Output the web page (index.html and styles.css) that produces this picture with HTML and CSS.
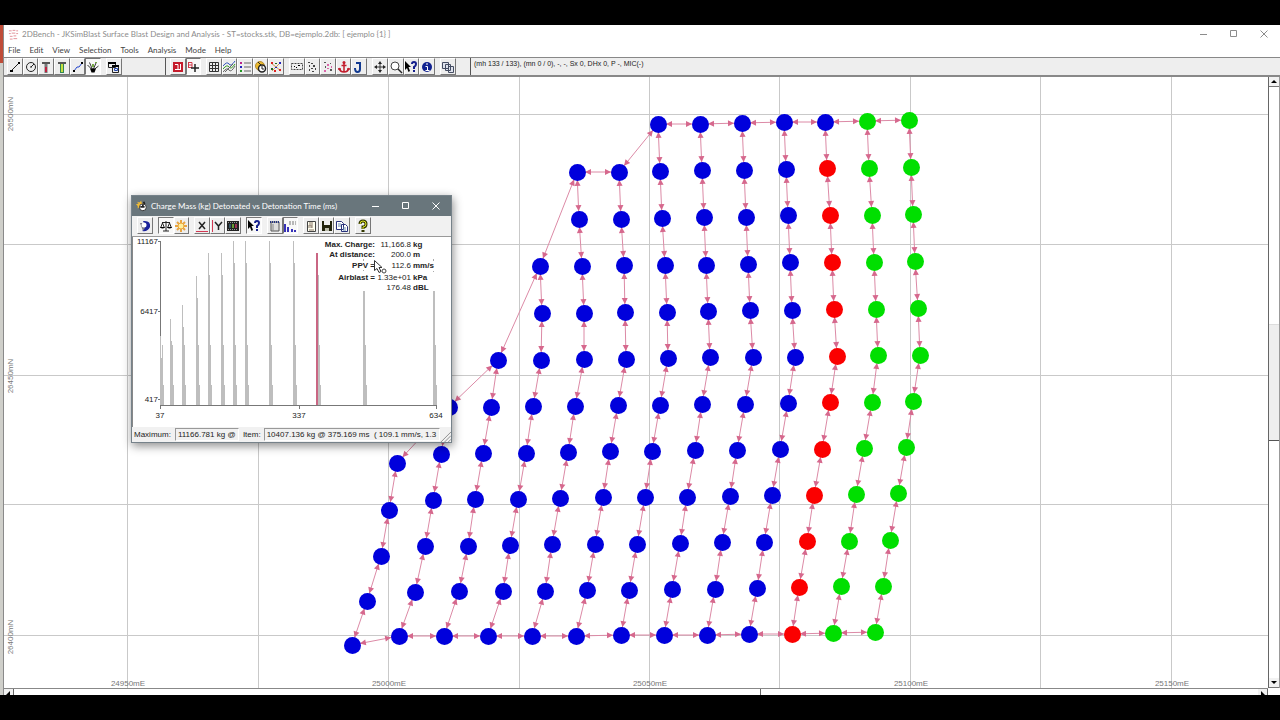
FILE: index.html
```html
<!DOCTYPE html>
<html lang="en">
<head>
<meta charset="utf-8">
<title>2DBench</title>
<link rel="stylesheet" href="styles.css">
</head>
<body>
<div class="desktop">
<div class="strip"></div>
<main class="window">
<header class="titlebar">
  <svg class="app-icon" viewBox="0 0 12 12"><path d="M1 2h3M5 1.500h3M9 2h2M1 5h2M4 4.500h4M9 5h2M2 8h3M6 7.500h3M2 11h3M6 10.500h4" stroke="#e08a93" fill="none"/></svg>
  <h1 class="app-title">2DBench - JKSimBlast Surface Blast Design and Analysis - ST=stocks.stk, DB=ejemplo.2db: [ ejemplo {1} ]</h1>
  <div class="win-controls">
    <button aria-label="Minimize"><svg viewBox="0 0 8 8"><path d="M0 4.500h7"/></svg></button>
    <button aria-label="Maximize"><svg viewBox="0 0 8 8"><path d="M.5.500h6v6h-6z"/></svg></button>
    <button aria-label="Close"><svg viewBox="0 0 8 8"><path d="M.5.500l7 7M7.500.500l-7 7"/></svg></button>
  </div>
</header>
<nav class="menu"><button>File</button><button>Edit</button><button>View</button><button>Selection</button><button>Tools</button><button>Analysis</button><button>Mode</button><button>Help</button></nav>
<div class="toolbar">
  <div class="tools-left">
    <div class="group g6">
      <button aria-label="Line"><svg viewBox="0 0 14 14"><path d="M3 11l8-8" stroke="#222"/><path d="M2 10h3v2H2zM10 2h2v2h-2z"/></svg></button>
      <button aria-label="Circle"><svg viewBox="0 0 14 14"><circle cx="7" cy="7" r="4.500" fill="none" stroke="#222"/><path d="M7 7l3-3M6 7h2" stroke="#222"/></svg></button>
      <button aria-label="Hole charge"><svg viewBox="0 0 14 14"><path d="M3 2h8v2H3z" fill="#555"/><path d="M5.500 4h3v9h-3z" fill="#777"/><path d="M6 7h2v5H6z" fill="#c02040"/></svg></button>
      <button aria-label="Hole deck"><svg viewBox="0 0 14 14"><path d="M3 2h8v2H3z" fill="#555"/><path d="M5 4h4v9H5z" fill="#385"/><path d="M6 4h2v8H6z" fill="#c8e040"/></svg></button>
      <button aria-label="Surface link"><svg viewBox="0 0 14 14"><path d="M3 11l3-4 2 0 3-4" stroke="#24c" fill="none"/><path d="M2 10h2v2H2zM10 2h2v2h-2z"/></svg></button>
      <button class="pressed" aria-label="Initiation"><svg viewBox="0 0 14 14"><path d="M1.500 5l5 5M3.500 2.500l3 7M7 10l3-7M7.500 10l5-4" fill="none" stroke="#333"/><path d="M4 8.500h6l-1.500 4h-3z"/><path d="M6 4h2v3H6zM9 2h2v1H9z" fill="#7a4"/></svg></button>
    </div>
    <div class="group g1"><button aria-label="Cascade"><svg viewBox="0 0 14 14"><path d="M1.500 2.500h7v5h-7zM5.500 5.500h6v7h-6z" fill="#eee" stroke="#222"/><path d="M1 2h8v2H1zM5 5h7v2H5z"/><path d="M7.500 8.500h3v2h-3z" fill="none" stroke="#24a"/></svg></button></div>
  </div>
  <div class="tools-main">
    <div class="group g2">
      <button aria-label="Single hole"><svg viewBox="0 0 14 14"><path d="M2 2h10v10H2z" fill="#c51c2c"/><path d="M4 4.500h3v5M4 9.500h6M9.500 4v5" stroke="#fff" fill="none"/></svg></button>
      <button class="pressed" aria-label="Add hole"><svg viewBox="0 0 14 14"><path d="M2.500 2v6M2 2.500h4v5H2M2 5h4" stroke="#d23648" fill="none"/><path d="M9 4v8M5 8h8" stroke="#222" stroke-width="1.500"/></svg></button>
    </div>
    <div class="group g5">
      <button aria-label="Grid"><svg viewBox="0 0 14 14"><path d="M2.500 2.500h9v9h-9zM5.500 2v10M8.500 2v10M2 5.500h10M2 8.500h10" stroke="#333" fill="none"/></svg></button>
      <button aria-label="Contours"><svg viewBox="0 0 14 14"><path d="M1 6q4-5 6-2t6-3" stroke="#35b" fill="none"/><path d="M1 9q4-5 6-2t6-3" stroke="#392" fill="none"/><path d="M1 12q4-5 6-2t6-4M3 12l8-8" stroke="#666" fill="none"/></svg></button>
      <button aria-label="Legend"><svg viewBox="0 0 14 14"><path d="M6 3h7M6 7h7M6 11h7" stroke="#666"/><path d="M2 2h2v2H2z" fill="#b28"/><path d="M2 6h2v2H2z" fill="#22b"/><path d="M2 10h2v2H2z" fill="#292"/></svg></button>
      <button aria-label="Detonate"><svg viewBox="0 0 14 14"><circle cx="6" cy="6" r="4.500" fill="#eab92d" stroke="#b78e32"/><circle cx="8" cy="8.500" r="3.500" fill="#fff" stroke="#222" stroke-width="1.500"/><path d="M8 6v3h2M4 2l3 3" stroke="#222" fill="none"/></svg></button>
      <button aria-label="Scatter"><svg viewBox="0 0 14 14"><path d="M2 3l10 8M3 11l8-8" stroke="#c89858"/><path d="M2 2h2v2H2zM10 9h2v2h-2zM5 10h2v2H5z" fill="#d22"/><path d="M6 3h2v1H6zM2 8h2v2H2z" fill="#262"/><path d="M10 2h2v2h-2zM6 7h2v1H6z" fill="#22b"/></svg></button>
    </div>
    <div class="group g5">
      <button aria-label="Select area"><svg viewBox="0 0 14 14"><path d="M1.500 3.500h11v6h-11z" fill="none" stroke="#444" stroke-dasharray="2 1"/><path d="M4 6h1v1H4zM8 5h2v1H8zM6 7h1v1H6z"/></svg></button>
      <button aria-label="Select points"><svg viewBox="0 0 14 14"><path d="M3 2h2v1H3zM6 3h2v1H6zM4 5h1v2H4zM8 5h2v2H8zM6 8h2v1H6zM10 8h1v2h-1zM4 9h1v2H4zM7 11h2v1H7z" fill="#444"/></svg></button>
      <button aria-label="Select links"><svg viewBox="0 0 14 14"><path d="M3 2h2v1H3zM9 3h1v1H9zM4 6h1v2H4zM9 9h2v2H9z" fill="#555"/><path d="M6 4h2v2H6zM6 8h2v1H6zM10 6h1v2h-1zM3 10h2v2H3z" fill="#db65aa"/></svg></button>
      <button aria-label="Anchor"><svg viewBox="0 0 14 14"><path d="M7 3v9M4.500 5.500h5M2 8q1 4 5 4t5-4M1 9h3M10 9h3" stroke="#c21c2c" stroke-width="1.500" fill="none"/><circle cx="7" cy="2.500" r="1.500" fill="#c21c2c"/></svg></button>
      <button aria-label="Hook"><svg viewBox="0 0 14 14"><path d="M4 3h4v6q0 3-2.500 3T3 8" stroke="#123a91" stroke-width="2" fill="none"/></svg></button>
    </div>
    <div class="group g4">
      <button aria-label="Pan"><svg viewBox="0 0 14 14"><path d="M7 3v8M3 7h8" stroke="#333"/><path d="M7 1l2 3H5zM7 13l2-3H5zM1 7l3-2v4zM13 7l-3-2v4z" fill="#222"/></svg></button>
      <button aria-label="Zoom"><svg viewBox="0 0 14 14"><circle cx="6" cy="6" r="4" fill="#fff" stroke="#444"/><path d="M9 9l4 4" stroke="#222" stroke-width="1.500"/></svg></button>
      <button aria-label="Context help"><svg viewBox="0 0 14 14"><path d="M1 1l6 6H4.500L6 11 4.500 12 3 8 1 10z"/><path d="M8 4q0-2 2-2t2 2-2 3v2M10 10v2" stroke="#141f8c" stroke-width="2" fill="none"/></svg></button>
      <button aria-label="Information"><svg viewBox="0 0 14 14"><circle cx="7" cy="7" r="5" fill="#10218f"/><path d="M7 3v2M5.500 6.500H7.500V11M5.500 10.500h4" stroke="#fff" fill="none"/></svg></button>
    </div>
    <div class="group g1"><button aria-label="Copy view"><svg viewBox="0 0 14 14"><path d="M1.500 2.500h6v6h-6zM4.500 4.500h5v6h-5zM7.500 6.500h5v6h-5z" fill="#dfe3ed" stroke="#444c62"/></svg></button></div>
  </div>
  <p class="readout">(mh 133 / 133), (mn 0 / 0), -, -, Sx 0, DHx 0, P -, MIC(-)</p>
</div>
<section class="workspace">
  <svg id="plan" class="plan" viewBox="4 77 1264 611" preserveAspectRatio="xMinYMin slice" role="img" aria-label="Blast pattern"></svg>
  <div class="vscroll"><button aria-label="Scroll up"><svg viewBox="0 0 10 9"><path d="M5 3L2 6h6z"/></svg></button><div class="vthumb"></div><button aria-label="Scroll down"><svg viewBox="0 0 10 9"><path d="M5 6L2 3h6z"/></svg></button></div>
</section>
<div class="hscroll"><button aria-label="Scroll left"><svg viewBox="0 0 9 6"><path d="M6 2v4H2z"/></svg></button><div class="hthumb"></div><button aria-label="Scroll right"><svg viewBox="0 0 9 6"><path d="M3 2v4h4z"/></svg></button></div>
</main>
</div>

<section class="dialog" role="dialog" aria-label="Charge mass chart">
  <header class="dialog-title">
    <svg class="bomb" viewBox="0 0 14 14"><path d="M1 2l3 1 2-2 1 3 3 0-2 2 1 3-4-1-3 2 0-3-2-2 3-1z" fill="#f0bb36"/><circle cx="8" cy="8.500" r="4" fill="#fff" stroke="#222"/><path d="M5 8h5M8 5v4M9 2l1 3" stroke="#222" stroke-width="2"/></svg>
    <h2>Charge Mass (kg) Detonated vs Detonation Time (ms)</h2>
    <div class="dialog-controls">
      <button aria-label="Minimize"><svg viewBox="0 0 8 8"><path d="M0 4.500h7"/></svg></button>
      <button aria-label="Maximize"><svg viewBox="0 0 8 8"><path d="M.5.500h6v6h-6z"/></svg></button>
      <button aria-label="Close"><svg viewBox="0 0 8 8"><path d="M.5.500l7 7M7.500.500l-7 7"/></svg></button>
    </div>
  </header>
  <div class="dialog-tools">
    <div class="group g1"><button aria-label="Exit"><svg viewBox="0 0 14 14"><path d="M2 4h3l3 4-3 4z" fill="#778"/><path d="M5 2q8-1 7 6-2 5-8 4 5-2 1-10z" fill="#1a229b"/><circle cx="6" cy="6" r="2.500" fill="#fff"/></svg></button></div>
    <div class="group g2">
      <button class="pressed" aria-label="Mass"><svg viewBox="0 0 14 14"><path d="M7 2v10M3 3.500h8M4 12h6M3.500 4L1.500 9M3.500 4l2 5M10.500 4l-2 5M10.500 4l2 5" stroke="#222" fill="none"/><path d="M1 8h5q-2.500 3-5 0M8 8h5q-2.500 3-5 0"/></svg></button>
      <button aria-label="Energy"><svg viewBox="0 0 14 14"><path d="M7 1v12M1 7h12M3 3l8 8M11 3l-8 8" stroke="#e9a440" stroke-width="2"/><circle cx="7" cy="7" r="3" fill="#ffee9a" stroke="#e9a53c"/></svg></button>
    </div>
    <div class="group g3">
      <button aria-label="X axis"><svg viewBox="0 0 14 14"><path d="M4 3l6 7M10 3l-6 7" stroke="#222" stroke-width="1.500"/><path d="M1 12.500h12" stroke="#d33853"/></svg></button>
      <button aria-label="Y axis"><svg viewBox="0 0 14 14"><path d="M4 3l3.500 4L11 3M7.500 7v4" stroke="#222" stroke-width="1.500" fill="none"/><path d="M1.500 1v12" stroke="#d33853"/></svg></button>
      <button aria-label="Colours"><svg viewBox="0 0 14 14"><path d="M1 2h12v10H1z" fill="#222"/><path d="M3 5h2v4H3z" fill="#356"/><path d="M6 5h2v4H6z" fill="#693"/><path d="M9 5h2v4H9z" fill="#935"/><path d="M2 3.500h10M2 10.500h10" stroke="#999" stroke-dasharray="1 1"/></svg></button>
    </div>
    <div class="group g1"><button class="pressed" aria-label="Item help"><svg viewBox="0 0 14 14"><path d="M1 1l6 6H4.500L6 11 4.500 12 3 8 1 10z"/><path d="M8 4q0-2 2-2t2 2-2 3v2M10 10v2" stroke="#141f8c" stroke-width="2" fill="none"/></svg></button></div>
    <div class="group g2">
      <button aria-label="Data table"><svg viewBox="0 0 14 14"><path d="M3 3h8v9H3z" fill="#ddd" stroke="#555"/><path d="M2 3h10" stroke="#233383" stroke-width="2" stroke-dasharray="1 1"/><path d="M5 5v7" stroke="#888"/></svg></button>
      <button class="pressed" aria-label="Histogram"><svg viewBox="0 0 14 14"><path d="M2 13V5M5 13V8M9 13v-3M12 13v-2" stroke="#3731b8" stroke-width="2"/><path d="M6 3h7M6 5h7" stroke="#777" stroke-dasharray="2 1"/></svg></button>
    </div>
    <div class="group g3">
      <button aria-label="Report"><svg viewBox="0 0 14 14"><path d="M3.500 2.500h8v10h-8z" fill="#fffff0" stroke="#444"/><path d="M5 9V6h2v3M8 9V5M5 11h5M5 4h4" stroke="#876" fill="none"/></svg></button>
      <button aria-label="Save"><svg viewBox="0 0 14 14"><path d="M2 2h10v10H2z" fill="#22230c"/><path d="M4 2h6v4H4z" fill="#eee"/><path d="M5 9h4v3H5z" fill="#bba"/></svg></button>
      <button aria-label="Copy"><svg viewBox="0 0 14 14"><path d="M1.500 2.500h5l2 2v6h-7zM6.500 5.500h4l2 2v5h-6z" fill="#fff" stroke="#27307b"/><path d="M3 5h3M3 7h3M8 9h3M8 11h3" stroke="#68a"/></svg></button>
    </div>
    <div class="group g1"><button aria-label="Help"><svg viewBox="0 0 14 14"><path d="M4 5q0-3 3-3t3 3-3 3v2M7 11v2" stroke="#333800" stroke-width="3" fill="none"/><path d="M4 5q0-3 3-3t3 3-3 3v2" stroke="#dfe326" fill="none"/></svg></button></div>
  </div>
  <svg id="chart" class="chart" viewBox="133 237 318 190" preserveAspectRatio="xMinYMin meet" role="img" aria-label="Charge mass by detonation time"></svg>
  <footer class="dialog-status"><span>Maximum:</span><output class="max">11166.781 kg @</output><span>Item:</span><output class="item">10407.136 kg @ 375.169 ms&nbsp; ( 109.1 mm/s, 1.3</output>
  <svg class="grip" viewBox="0 0 12 12"><path d="M1 12L12 1M5 12l7-7M9 12l3-3" stroke="#888"/></svg></footer>
</section>
<script src="app.js"></script>
</body>
</html>
```
FILE: styles.css
```css
* { box-sizing: border-box; }
body { margin: 0; height: 100vh; padding: 25px 0; background: #000; display: flex; flex-direction: column; font-family: "Liberation Sans", Arial, sans-serif; font-size: 8px; color: #222; overflow: hidden; position: relative; }
h1, h2, p { margin: 0; font-weight: 400; }
button { font: inherit; color: inherit; background: none; border: 0; padding: 0; margin: 0; display: flex; align-items: center; justify-content: center; }
svg { display: block; }
.desktop { flex: 1; min-height: 0; display: flex; background: #fff; }
.strip { width: 3px; background: linear-gradient(#bf4c38 0 38px, #cfcfca 38px); }
.window { flex: 1; min-width: 0; display: flex; flex-direction: column; border-left: 1px solid #8a8a8a; }
.titlebar { height: 18px; display: flex; align-items: center; padding-left: 4px; color: #8c8c8c; }
.app-icon { width: 11px; height: 11px; }
.app-title { margin-left: 3px; font-family: Lato, "Noto Sans", sans-serif; font-size: 8px; white-space: nowrap; flex: 1; }
.win-controls { display: flex; gap: 22px; padding-right: 12px; }
.win-controls svg, .dialog-controls svg { width: 8px; height: 8px; fill: none; stroke: #8c8c8c; }
.menu { height: 14px; display: flex; align-items: center; gap: 9px; padding-left: 4px; font-family: Lato, "Noto Sans", sans-serif; font-size: 8px; color: #444; }
.toolbar { height: 20px; display: flex; background: #eee; border-top: 1px solid #888; border-bottom: 2px solid #888; }
.tools-left, .tools-main { display: flex; border-right: 1px solid #555; }
.tools-left { width: 162px; padding-left: 3px; gap: 5px; }
.tools-main { width: 305px; padding-left: 4px; gap: 5px; }
.readout { font-size: 7px; line-height: 12px; padding-left: 3px; white-space: nowrap; }
.group { display: flex; height: 17px; flex: none; }
.group button { flex: 1; min-width: 0; background: #eee; border: 1px solid; border-color: #fff #777 #777 #fff; overflow: hidden; }
.group .pressed { background: #f8f8f8; border-color: #777 #fff #fff #777; }
.group svg { width: 14px; height: 14px; flex: none; }
.g1 { width: 16px; } .g2 { width: 31px; } .g3 { width: 47px; } .g4 { width: 63px; } .g5 { width: 78px; } .g6 { width: 94px; }
.workspace { flex: 1; min-height: 0; display: flex; }
.plan { flex: 1; min-width: 0; width: 100%; height: 100%; font-size: 8px; }
.plan .grid { stroke: #c9c9c9; }
.plan .axis { fill: #777; text-anchor: middle; }
.plan .link { stroke: #dc8aa6; }
.plan .arrow { fill: #d6688d; }
.blue { fill: #0000dc; } .red { fill: #fb0000; } .green { fill: #00df00; }
.vscroll { width: 12px; border-left: 1px solid #666; border-right: 1px solid #999; display: flex; flex-direction: column; justify-content: space-between; background: #fff; }
.vscroll button { height: 10px; background: #f2f2f2; border-bottom: 1px solid #777; }
.vscroll svg { width: 10px; height: 9px; }
.vthumb { height: 19%; background: #eee; border-bottom: 1px solid #555; border-top: 1px solid #ddd; }
.hscroll { height: 7px; border-top: 1px solid #888; background: #fff; display: flex; margin-right: 12px; }
.hscroll button { width: 10px; border-right: 1px solid #666; background: #f2f2f2; }
.hscroll svg { width: 9px; height: 6px; }
.hthumb { flex: 1; background: linear-gradient(90deg, #fff 60%, #666 60%, #666 calc(60% + 1px), #fff 0); }
.dialog { position: absolute; left: 131px; top: 195px; width: 321px; background: #f1f1f1; border: 1px solid #76828a; box-shadow: 1px 3px 9px rgba(0,0,0,.45); display: flex; flex-direction: column; }
.dialog-title { height: 20px; background: #69767c; color: #fff; display: flex; align-items: center; padding-left: 4px; }
.bomb { width: 12px; height: 12px; }
.dialog-title h2 { flex: 1; margin-left: 3px; font-family: Lato, "Noto Sans", sans-serif; font-size: 8px; white-space: nowrap; }
.dialog-controls { display: flex; gap: 22px; padding-right: 11px; }
.dialog-controls svg { stroke: #fff; }
.dialog-tools { height: 21px; padding: 1px 5px; display: flex; gap: 5px; border-bottom: 1px solid #999; }
.chart { width: 100%; background: #fff; border-left: 1px solid #888; font-size: 8px; fill: #222; }
.chart .b { font-weight: 700; }
.chart .end { text-anchor: end; } .chart .mid { text-anchor: middle; }
.dialog-status { height: 15px; display: flex; align-items: center; padding-left: 2px; position: relative; white-space: nowrap; }
.dialog-status output { border: 1px solid; border-color: #999 #fff #fff #999; height: 13px; line-height: 12px; padding-left: 2px; overflow: hidden; }
.max { width: 64px; margin: 0 4px 0 4px; }
.item { width: 176px; margin-left: 3px; }
.grip { position: absolute; right: 0; bottom: 0; width: 11px; height: 11px; }
```
FILE: app.js
```js
const plan = document.getElementById('plan');
const columns = [
  [[909,120],[911,167],[913,214],[915,261],[918,308],[920,355],[913,401],[906,447],[898,493],[890,540],[883,586],[875,632]],
  [[867,121],[869,168],[872,215],[874,262],[876,309],[878,355],[872,402],[864,448],[856,494],[849,541],[841,586],[833,633]],
  [[825,122],[827,168],[830,215],[832,262],[834,309],[837,356],[830,402],[822,449],[814,495],[807,541],[799,587],[792,634]],
  [[784,122],[786,169],[788,215],[790,262],[792,310],[795,357],[788,403],[780,449],[772,495],[764,542],[757,588],[749,634]],
  [[742,123],[744,170],[746,217],[748,264],[750,310],[753,357],[745,404],[737,450],[730,496],[722,542],[715,589],[707,635]],
  [[700,124],[702,170],[704,217],[706,265],[708,311],[710,357],[702,404],[695,450],[687,497],[680,543],[672,589],[664,635]],
  [[658,124],[660,171],[662,218],[665,265],[667,312],[668,358],[660,405],[652,451],[645,497],[637,544],[629,590],[621,635]],
  [[619,172],[621,219],[624,265],[625,312],[626,359],[618,405],[610,451],[603,497],[595,544],[587,590],[576,636]],
  [[577,172],[579,219],[582,266],[584,313],[584,359],[575,406],[568,452],[560,498],[552,544],[545,591],[532,636]],
  [[540,266],[542,313],[541,360],[533,406],[526,453],[518,499],[510,545],[503,591],[488,636]],
  [[498,360],[491,407],[483,453],[475,499],[468,546],[459,591],[444,636]],
  [[449,407],[441,454],[433,500],[425,546],[415,592],[399,636]],
  [[397,463],[389,510],[381,556],[367,601],[352,645]]
];
let out = '';
[127,258,388,519,649,779,910,1040,1171].forEach(x => out += `<path class="grid" d="M${x + .5} 77V688"/>`);
[114,244,375,504,635].forEach(y => out += `<path class="grid" d="M4 ${y + .5}H1268"/>`);
[[128,'24950mE'],[389,'25000mE'],[650,'25050mE'],[911,'25100mE'],[1172,'25150mE']].forEach(([x, t]) => out += `<text class="axis" x="${x}" y="686">${t}</text>`);
[[114,'26500mN'],[376,'26450mN'],[637,'26400mN']].forEach(([y, t]) => out += `<text class="axis" transform="translate(13 ${y}) rotate(-90)">${t}</text>`);

function arrow(x, y, a) {
  return `<path class="arrow" d="M0 0L-6 -3V3Z" transform="translate(${x} ${y}) rotate(${a * 180 / Math.PI})"/>`;
}
function link([x1, y1], [x2, y2]) {
  const a = Math.atan2(y2 - y1, x2 - x1), c = Math.cos(a) * 8, s = Math.sin(a) * 8;
  out += `<path class="link" d="M${x1} ${y1}L${x2} ${y2}"/>` + arrow(x1 + c, y1 + s, a + Math.PI) + arrow(x2 - c, y2 - s, a);
}
columns.forEach((col, i) => {
  for (let j = 1; j < col.length; j++) link(col[j - 1], col[j]);
  const next = columns[i + 1];
  if (next) {
    link(col[0], next[0]);
    link(col[col.length - 1], next[next.length - 1]);
  }
});
columns.forEach((col, i) => col.forEach(([x, y], j) => {
  const kind = i < 2 ? 'green' : i === 2 && j > 0 ? 'red' : 'blue';
  out += `<circle class="${kind}" cx="${x + .5}" cy="${y + .5}" r="8.500"/>`;
}));
plan.innerHTML = out;

let c = '<path d="M160.500 241V406M158 241.500h3M158 311.500h3M158 399.500h3M160 405.500H436M160.500 405v4M299.500 405v4M436.500 405v4" stroke="#777" fill="none"/>';
[[160,336],[170,319],[182,305],[196,276],[208,253],[221,253],[233,241],[245,241],[269,241],[293,241],[317,253],[363,291],[433,291]].forEach(([x, top]) => {
  const w = top === 291 ? 2 : 1;
  c += `<path fill="#bebebe" d="M${x} ${top}h${w}V${top + 22}H${x + 2}V345H${x + 3}V385H${x + 4}V405H${x}Z"/>`;
});
c += '<path fill="#c96683" d="M316 253h2v152h-2z"/><path fill="#aaa" d="M363 259h1v2h-1zM433 259h1v2h-1zM433 271h1v1h-1zM363 270h1v1h-1z"/>';
[['11167',244],['6417',314],['417',402]].forEach(([t, y]) => c += `<text class="end" x="158" y="${y}">${t}</text>`);
[['37',160],['337',299],['634',436]].forEach(([t, x]) => c += `<text class="mid" x="${x}" y="418">${t}</text>`);
[['Max. Charge:',375,247,'11,166.8','kg',411,413],['At distance:',375,257,'200.0','m',411,413],['PPV =',375,268,'112.6','mm/s',411,413],['Airblast =',375,280,'1.33e+01','kPa',411,413],['',375,290,'176.48','dBL',411,413]].forEach(([l, x, y, v, u, vx, ux]) => {
  c += `<text class="b end" x="${x}" y="${y}">${l}</text><text class="end" x="${vx}" y="${y}">${v}</text><text class="b" x="${ux}" y="${y}">${u}</text>`;
});
c += '<path d="M374.500 260.500v10l2.500-2 2 4 2-1-2-4h3z" fill="#fff" stroke="#333"/><circle cx="384" cy="271" r="2" fill="#fff" stroke="#444"/>';
document.getElementById('chart').innerHTML = c;
```
